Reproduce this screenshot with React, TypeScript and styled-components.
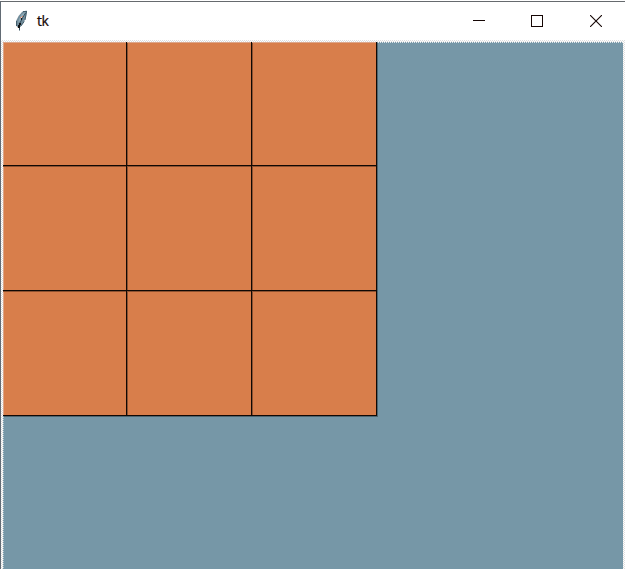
import React from "react";
import styled, { createGlobalStyle } from "styled-components";

const GlobalStyle = createGlobalStyle`
  * { box-sizing: border-box; }
  body { margin: 0; background: #fff; overflow: hidden; }
`;

const Window = styled.main`
  width: 625px;
  height: 569px;
  display: flex;
  flex-direction: column;
  padding-top: 1px;
  background: #fff;
  font-family: "Open Sans", "Noto Sans", sans-serif;
`;

const Frame = styled.div`
  flex: 1;
  display: flex;
  flex-direction: column;
  border-top: 1px solid #666a6e;
  border-left: 1px solid #626b74;
`;

const TitleBar = styled.header`
  height: 38px;
  flex: none;
  display: flex;
  align-items: center;
  justify-content: space-between;
`;

const Caption = styled.div`
  display: flex;
  height: 38px;
  padding-left: 13px;
  padding-top: 7px;
`;

const Title = styled.span`
  margin-left: 7px;
  font-size: 14px;
  line-height: 24px;
  letter-spacing: -0.4px;
  color: #150604;
  -webkit-text-stroke: 0.2px #150604;
`;

const Controls = styled.div`
  display: flex;
  height: 38px;
`;

const ControlButton = styled.button`
  width: 58.5px;
  height: 38px;
  padding: 0;
  border: 0;
  background: transparent;
  display: flex;
  justify-content: center;
  align-items: center;
`;

const Client = styled.section`
  flex: 1;
  padding: 2px 2px 0;
  background: repeating-conic-gradient(#dedede 0 25%, #fff 0 50%) 0 0 / 2px 2px;
`;

const Canvas = styled.div`
  width: 620px;
  height: 100%;
  background:
    repeating-linear-gradient(90deg, #7697a7 0 1px, #dfe5e8 1px 2px) 0 0 / 100% 1px no-repeat,
    repeating-linear-gradient(#7697a7 0 1px, #b8c9d1 1px 2px) 0 0 / 1px 100% no-repeat,
    #7697a7;
`;

const Board = styled.div`
  width: 374px;
  display: grid;
  grid-template-columns: 124px 125px 125px;
  grid-template-rows: 124px 125px 125px;
  box-shadow: 1px 1px #4d6670;
`;

const Cell = styled.div<{ $top: string; $left: string }>`
  background: #d87e4b;
  border-right: 1px solid #100804;
  border-bottom: 1px solid #100804;
  box-shadow: inset 0 1px ${(p) => p.$top}, inset 1px 0 ${(p) => p.$left};
`;

function Feather() {
  return (
    <svg width="16" height="24" viewBox="0 0 16 24" fill="none">
      <path d="M12.6 1.4 L8.2 2.8 L4.6 7 L2.3 11.5 L2 16.5 L4 18.5 L7.2 17 L10.2 12.5 L12 8 Z" fill="#728c9a" />
      <path d="M11 3 L7.5 5.5 L5 10 L4 14 L7 11.5 L10.5 7 Z" fill="#8faab7" />
      <path d="M2.5 12V17 M6.5 17.5L10.2 12.5 M11 11L12.5 3 M9 2.5h4" stroke="#425d6b" />
      <path d="M5.5 21.5V18 M6 14L8.5 9 L11.5 4" stroke="#314d5c" />
      <path d="M7 9h1v2H7z M5 14h2v2H5z M4 16h2v3H4z" fill="#101316" />
      <path d="M6 8h1v1H6z M8 7h1v1H8z" fill="#df8060" />
      <path d="M7 8h1v1H7z M3 18h1v1H3z" fill="#e8d6ca" />
    </svg>
  );
}

const stroke = "#150604";
const edge = "#dda68a";
const shade = "#8d5231";

const cells = Array.from({ length: 9 }, (_, i) => i);

export default function App() {
  return (
    <>
      <GlobalStyle />
      <Window>
        <Frame>
          <TitleBar>
            <Caption>
              <Feather />
              <Title>tk</Title>
            </Caption>
            <Controls>
              <ControlButton aria-label="Minimize">
                <svg width="12" height="12" shapeRendering="crispEdges">
                  <path d="M0 5.5H12" stroke={stroke} />
                </svg>
              </ControlButton>
              <ControlButton aria-label="Maximize">
                <svg width="12" height="12" shapeRendering="crispEdges">
                  <path d="M.5 .5H11.5V11.5H.5Z" fill="none" stroke={stroke} />
                </svg>
              </ControlButton>
              <ControlButton aria-label="Close">
                <svg width="12" height="12">
                  <path d="M0 0L12 12M12 0L0 12" stroke={stroke} strokeWidth="1.1" />
                </svg>
              </ControlButton>
            </Controls>
          </TitleBar>
          <Client>
            <Canvas>
              <Board>
                {cells.map((i) => (
                  <Cell key={i} $top={i < 3 ? edge : shade} $left={i % 3 === 0 ? edge : shade} />
                ))}
              </Board>
            </Canvas>
          </Client>
        </Frame>
      </Window>
    </>
  );
}
